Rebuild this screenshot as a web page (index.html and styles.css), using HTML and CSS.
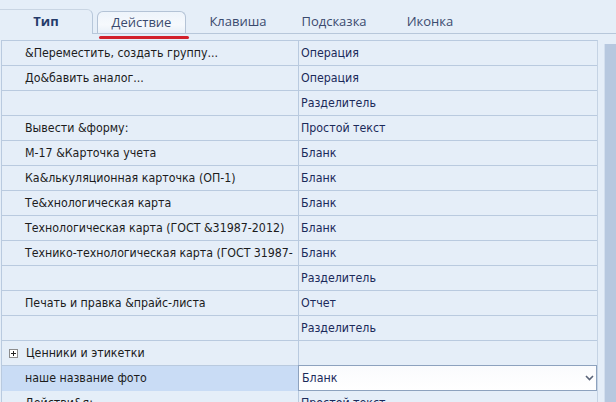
FILE: index.html
```html
<!DOCTYPE html>
<html>
<head>
<meta charset="utf-8">
<link rel="stylesheet" href="styles.css">
</head>
<body>
<div class="tabs">
  <div class="tab active">Тип</div>
  <div class="tab hover">Действие</div>
  <div class="tab">Клавиша</div>
  <div class="tab">Подсказка</div>
  <div class="tab">Иконка</div>
</div>
<div class="panel">
  <div class="grid">
    <div class="row"><div class="c1">&amp;Переместить, создать группу...</div><div class="c2">Операция</div></div>
    <div class="row"><div class="c1">До&amp;бавить аналог...</div><div class="c2">Операция</div></div>
    <div class="row"><div class="c1"></div><div class="c2">Разделитель</div></div>
    <div class="row"><div class="c1">Вывести &amp;форму:</div><div class="c2">Простой текст</div></div>
    <div class="row"><div class="c1">М-17 &amp;Карточка учета</div><div class="c2">Бланк</div></div>
    <div class="row"><div class="c1">Ка&amp;лькуляционная карточка (ОП-1)</div><div class="c2">Бланк</div></div>
    <div class="row"><div class="c1">Те&amp;хнологическая карта</div><div class="c2">Бланк</div></div>
    <div class="row"><div class="c1">Технологическая карта (ГОСТ &amp;31987-2012)</div><div class="c2">Бланк</div></div>
    <div class="row"><div class="c1 tight">Технико-технологическая карта (ГОСТ 31987-</div><div class="c2">Бланк</div></div>
    <div class="row"><div class="c1"></div><div class="c2">Разделитель</div></div>
    <div class="row"><div class="c1">Печать и правка &amp;прайс-листа</div><div class="c2">Отчет</div></div>
    <div class="row"><div class="c1"></div><div class="c2">Разделитель</div></div>
    <div class="row"><div class="c1 group"><span class="plus"></span>Ценники и этикетки</div><div class="c2"></div></div>
    <div class="row selected"><div class="c1">наше название фото</div><div class="c2 editor"><span>Бланк</span><svg class="chev" width="9" height="6" viewBox="0 0 9 6"><path d="M1 1 L4.5 4.5 L8 1" fill="none" stroke="#5a6478" stroke-width="1.6"/></svg></div></div>
    <div class="row"><div class="c1">Действи&amp;я:</div><div class="c2">Простой текст</div></div>
  </div>
  <div class="scroll"><div class="thumb"></div></div>
</div>
</body>
</html>
```
FILE: styles.css
```css
html, body {
  margin: 0;
  padding: 0;
  width: 616px;
  height: 402px;
  overflow: hidden;
  background: #e5eef8;
  font-family: "DejaVu Sans Condensed", "DejaVu Sans", sans-serif;
  font-size: 12.3px;
}
.tabs {
  display: flex;
  height: 33px;
  border-bottom: 1px solid #b7c7da;
  position: relative;
}
.tab {
  width: 96px;
  height: 23px;
  margin-top: 10px;
  text-align: center;
  line-height: 22px;
  color: #3a4a6e;
  font-family: "Open Sans", "Noto Sans", sans-serif;
  font-size: 13px;
  box-sizing: border-box;
}
.tab.active {
  width: 93px;
  height: 25px;
  margin-top: 9px;
  margin-bottom: -1px;
  background: #e5eef8;
  border-top: 1px solid #c9d5e3;
  border-right: 1px solid #b7c7da;
  border-top-right-radius: 6px;
  color: #243b6a;
  font-weight: bold;
  line-height: 23px;
}
.tab.hover {
  width: 89px;
  margin-left: 4px;
  margin-right: 4px;
  margin-top: 11px;
  height: 22px;
  border: 1px solid #b4c3d6;
  border-bottom: none;
  border-radius: 6px 6px 0 0;
  background: linear-gradient(#eef4fb, #f6f9fd 60%, #e9f0f8);
  line-height: 20px;
  position: relative;
}
.tab.hover::after {
  content: "";
  position: absolute;
  left: 1px;
  top: 24px;
  width: 90px;
  height: 3px;
  border-radius: 2px;
  background: #d2202b;
}
.panel {
  display: flex;
  padding-top: 6px;
  padding-left: 1px;
}
.grid {
  width: 597px;
  border-top: 1px solid #b9cadf;
  border-left: 1px solid #b9cadf;
  border-right: 1px solid #c5d3e4;
  box-sizing: border-box;
}
.row {
  display: grid;
  grid-template-columns: 297px 1fr;
  height: 25px;
  border-bottom: 1px solid #b9cadf;
  box-sizing: border-box;
}
.c1, .c2 {
  white-space: nowrap;
  overflow: hidden;
  line-height: 24px;
}
.c1 {
  padding-left: 23px;
  color: #1c1c1c;
  border-right: 1px solid #b9cadf;
}
.c1.tight {
  letter-spacing: -0.05px;
}
.c2 {
  padding-left: 2px;
  color: #1b2a5a;
}
.group {
  padding-left: 6px;
  display: flex;
  align-items: center;
}
.plus {
  width: 7px;
  height: 7px;
  border: 1px solid #8c8c8c;
  background: #fff;
  margin-right: 8px;
  margin-left: 1px;
  position: relative;
}
.plus::before {
  content: "";
  position: absolute;
  left: 1px;
  top: 3px;
  width: 5px;
  height: 1px;
  background: #222;
}
.plus::after {
  content: "";
  position: absolute;
  left: 3px;
  top: 1px;
  width: 1px;
  height: 5px;
  background: #222;
}
.selected .c1 {
  background: #c9dcf5;
}
.editor {
  margin-top: -1px;
  height: 26px;
  margin-left: -1px;
  border: 1px solid #8da2be;
  background: linear-gradient(#fafbfd, #ffffff);
  display: flex;
  align-items: center;
  justify-content: space-between;
  padding-left: 3px;
  padding-right: 2px;
  box-sizing: border-box;
  color: #1b2a5a;
}
.scroll {
  margin-left: 6px;
  padding-top: 4px;
  width: 12px;
}
.thumb {
  height: 400px;
  background: #b7c8df;
  border-left: 1px solid #d3dfee;
}
```
